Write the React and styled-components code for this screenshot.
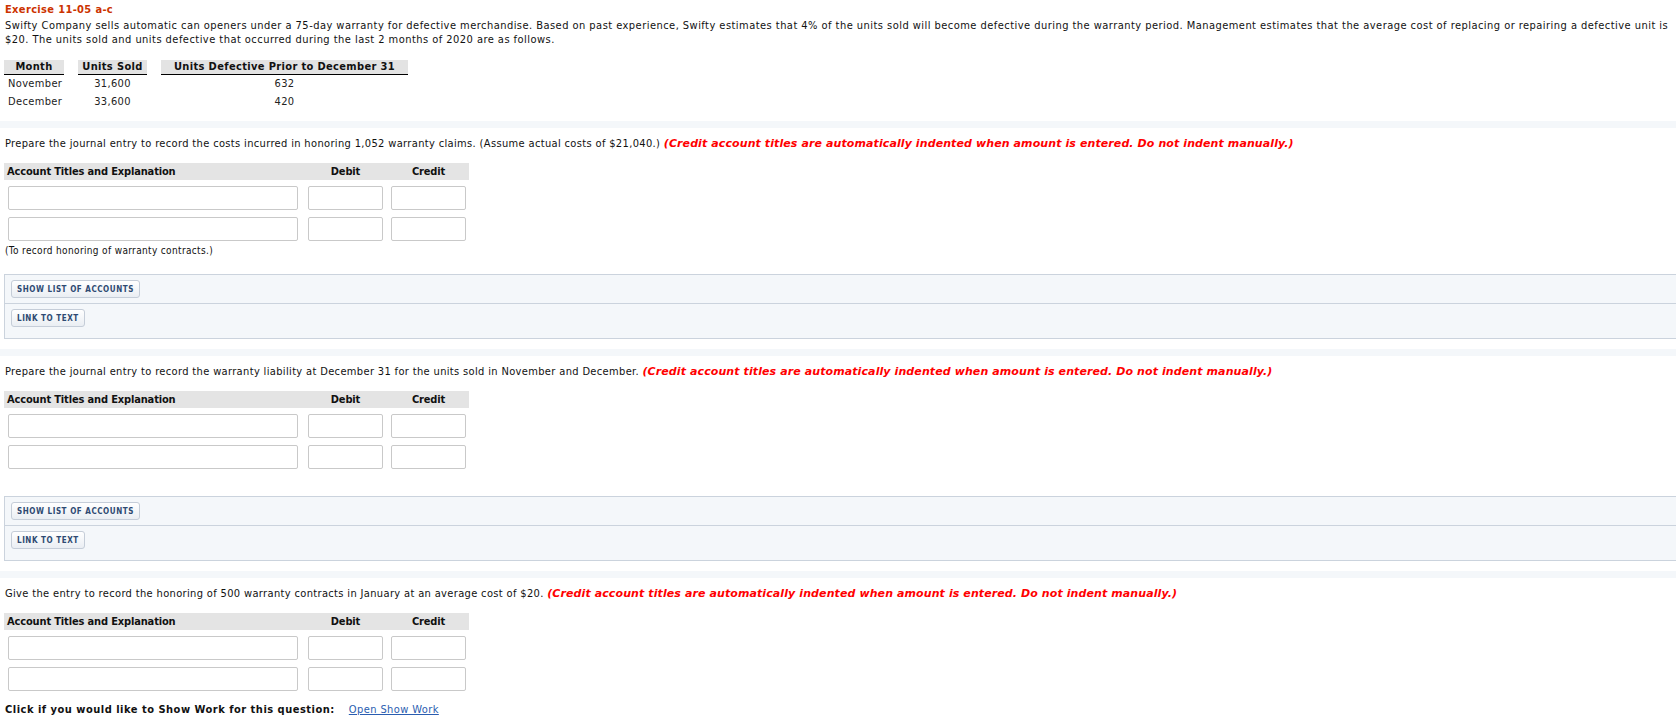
import React from 'react';
import styled, { createGlobalStyle } from 'styled-components';

const GlobalStyle = createGlobalStyle`
  body {
    margin: 0;
    background: #fff;
    overflow: hidden;
    font-family: "DejaVu Sans Condensed", "DejaVu Sans", sans-serif;
    font-size: 11px;
    letter-spacing: 0.35px;
    color: #111;
  }
`;

const Page = styled.div`
  width: 1700px;
  padding: 3px 0 0 4px;
`;

const Title = styled.div`
  font-weight: bold;
  line-height: 14px;
  color: #cc3300;
  padding-left: 1px;
`;

const Intro = styled.p`
  margin: 2px 0 0;
  padding-left: 1px;
  line-height: 14px;
  letter-spacing: 0.46px;
`;

const DataTable = styled.div`
  display: grid;
  grid-template-columns: 60px 69px 247px;
  column-gap: 14px;
  margin-top: 13px;
`;

const HeadCell = styled.div`
  background: #e3e3e3;
  border-bottom: 1px solid #000;
  font-weight: bold;
  text-align: center;
  line-height: 14px;
  height: 14px;
`;

const Cell = styled.div`
  height: 18px;
  line-height: 18px;
  text-align: ${(p) => (p.$left ? 'left' : 'center')};
  padding-left: ${(p) => (p.$left ? '4px' : '0')};
  color: #222;
`;

const Band = styled.div`
  height: 7px;
  margin: 10px 0 0 -4px;
  background: #f4f7fa;
`;

const Prompt = styled.p`
  margin: 9px 0 0;
  padding-left: 1px;
  line-height: 14px;
`;

const Warning = styled.span`
  font-family: "DejaVu Sans", sans-serif;
  letter-spacing: 0.1px;
  color: #f00;
  font-weight: bold;
  font-style: italic;
`;

const Journal = styled.div`
  width: 465px;
  margin-top: 12px;
`;

const JournalHead = styled.div`
  display: grid;
  grid-template-columns: 300px 83px 82px;
  height: 17px;
  line-height: 17px;
  background: #e4e4e4;
  font-weight: bold;
  letter-spacing: -0.15px;
`;

const HeadLabel = styled.div`
  padding-left: ${(p) => (p.$first ? '3px' : '4px')};
  width: ${(p) => (p.$first ? 'auto' : '75px')};
  text-align: ${(p) => (p.$first ? 'left' : 'center')};
`;

const EntryRow = styled.div`
  display: grid;
  grid-template-columns: 300px 83px 82px;
  margin-top: ${(p) => (p.$first ? '6px' : '7px')};
`;

const Field = styled.input`
  box-sizing: border-box;
  margin: 0 0 0 4px;
  width: ${(p) => (p.$wide ? '290px' : '75px')};
  height: 24px;
  border: 1px solid #c9c9c9;
  border-radius: 2px;
  background: #fff;
  outline: none;
`;

const Note = styled.div`
  margin-top: 3px;
  min-height: 8px;
  padding-left: 1px;
  font-size: 10px;
  line-height: 14px;
  color: #111;
`;

const Tools = styled.div`
  margin-top: 16px;
  border: 1px solid #cbd3dd;
  border-right: none;
  background: #f4f7fa;
`;

const ToolRow = styled.div`
  padding: 5px 6px ${(p) => (p.$last ? '11px' : '5px')};
  border-bottom: ${(p) => (p.$last ? 'none' : '1px solid #cbd3dd')};
`;

const ToolButton = styled.button`
  box-sizing: border-box;
  height: 18px;
  padding: 0 5px;
  border: 1px solid #c5cdd8;
  border-radius: 3px;
  background: linear-gradient(#ffffff, #eaeef3);
  font-family: "DejaVu Sans Condensed", "DejaVu Sans", sans-serif;
  font-size: 8px;
  font-weight: bold;
  letter-spacing: 0.55px;
  color: #2e4a72;
  cursor: pointer;
`;

const ShowWork = styled.p`
  margin: 12px 0 0;
  padding-left: 1px;
  line-height: 14px;
  font-weight: bold;
  letter-spacing: 0.5px;
`;

const WorkLink = styled.a`
  margin-left: 14px;
  font-weight: normal;
  letter-spacing: 0.4px;
  color: #2a5db0;
  text-decoration: underline;
`;

const WARN = '(Credit account titles are automatically indented when amount is entered. Do not indent manually.)';

const units = [
  { month: 'November', sold: '31,600', defective: '632' },
  { month: 'December', sold: '33,600', defective: '420' },
];

const JournalEntry = () => (
  <Journal>
    <JournalHead>
      <HeadLabel $first>Account Titles and Explanation</HeadLabel>
      <HeadLabel>Debit</HeadLabel>
      <HeadLabel>Credit</HeadLabel>
    </JournalHead>
    {[0, 1].map((i) => (
      <EntryRow key={i} $first={i === 0}>
        <div><Field $wide type="text" /></div>
        <div><Field type="text" /></div>
        <div><Field type="text" /></div>
      </EntryRow>
    ))}
  </Journal>
);

const ToolPanel = () => (
  <Tools>
    <ToolRow>
      <ToolButton>SHOW LIST OF ACCOUNTS</ToolButton>
    </ToolRow>
    <ToolRow $last>
      <ToolButton>LINK TO TEXT</ToolButton>
    </ToolRow>
  </Tools>
);

export default function App() {
  return (
    <Page>
      <GlobalStyle />
      <Title>Exercise 11-05 a-c</Title>
      <Intro>
        Swifty Company sells automatic can openers under a 75-day warranty for defective merchandise. Based on past experience, Swifty estimates that 4% of the units sold will become defective during the warranty period. Management estimates that the average cost of replacing or repairing a defective unit is
        <br />
        $20. The units sold and units defective that occurred during the last 2 months of 2020 are as follows.
      </Intro>

      <DataTable>
        <HeadCell>Month</HeadCell>
        <HeadCell>Units Sold</HeadCell>
        <HeadCell>Units Defective Prior to December 31</HeadCell>
        {units.map((u) => (
          <React.Fragment key={u.month}>
            <Cell $left>{u.month}</Cell>
            <Cell>{u.sold}</Cell>
            <Cell>{u.defective}</Cell>
          </React.Fragment>
        ))}
      </DataTable>

      <Band />
      <Prompt>
        Prepare the journal entry to record the costs incurred in honoring 1,052 warranty claims. (Assume actual costs of $21,040.) <Warning>{WARN}</Warning>
      </Prompt>
      <JournalEntry />
      <Note>(To record honoring of warranty contracts.)</Note>
      <ToolPanel />

      <Band />
      <Prompt>
        Prepare the journal entry to record the warranty liability at December 31 for the units sold in November and December. <Warning>{WARN}</Warning>
      </Prompt>
      <JournalEntry />
      <Note />
      <ToolPanel />

      <Band />
      <Prompt>
        Give the entry to record the honoring of 500 warranty contracts in January at an average cost of $20. <Warning>{WARN}</Warning>
      </Prompt>
      <JournalEntry />
      <ShowWork>
        Click if you would like to Show Work for this question:
        <WorkLink href="#">Open Show Work</WorkLink>
      </ShowWork>
    </Page>
  );
}
